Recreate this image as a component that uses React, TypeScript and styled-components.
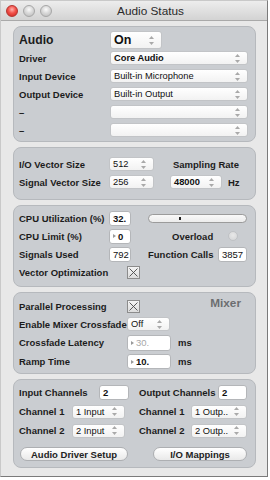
import styled, { createGlobalStyle } from 'styled-components'

const Global = createGlobalStyle`
  html, body { margin: 0; padding: 0; background: #fff; }
  body { font-family: 'Liberation Sans', Arial, sans-serif; color: #1c1c1c; }
`

const Window = styled.div`
  width: 268px;
  height: 477px;
  box-sizing: border-box;
  border: 1px solid #c9c9c9;
  border-right-color: #7a7a7a;
  border-bottom-color: #7a7a7a;
  background: #e8e8e8;
  display: flex;
  flex-direction: column;
`

const TitleBar = styled.div`
  height: 19px;
  flex: none;
  display: flex;
  align-items: center;
  background: linear-gradient(#ededed, #d3d3d3);
  border-bottom: 1px solid #a9a9a9;
`

const Lights = styled.div`
  display: flex;
  gap: 5px;
  padding-left: 5px;
`

const Light = styled.span<{ $red?: boolean }>`
  width: 12px;
  height: 12px;
  border-radius: 50%;
  box-sizing: border-box;
  border: 1px solid ${(p) => (p.$red ? '#b5342f' : '#a7a7a7')};
  background: ${(p) =>
    p.$red
      ? 'radial-gradient(circle at 50% 35%, #ffb3ad 0, #f2514a 45%, #c8231d 100%)'
      : 'radial-gradient(circle at 50% 35%, #fbfbfb 0, #d6d6d6 50%, #b9b9b9 100%)'};
`

const Title = styled.div`
  flex: 1;
  text-align: center;
  font-size: 11.8px;
  color: #2a2a2a;
  margin-right: 18px;
`

const Body = styled.div`
  display: flex;
  flex-direction: column;
  gap: 5px;
  padding: 5px 11px 0 12px;
`

const Panel = styled.div<{ $h: number; $pt: number }>`
  height: ${(p) => p.$h}px;
  box-sizing: border-box;
  border: 1px solid #b6b9bd;
  border-radius: 8px;
  background: #cacdd1;
  padding: ${(p) => p.$pt}px 7px 0 5px;
  display: flex;
  flex-direction: column;
`

const Row = styled.div<{ $h?: number; $mt?: number }>`
  height: ${(p) => p.$h ?? 18}px;
  margin-top: ${(p) => p.$mt ?? 0}px;
  display: flex;
  align-items: center;
  flex: none;
`

const Half = styled.div<{ $w: number; $ml?: number }>`
  width: ${(p) => p.$w}px;
  margin-left: ${(p) => p.$ml ?? 0}px;
  display: flex;
  align-items: center;
  justify-content: space-between;
`

const Label = styled.span<{ $w?: number; $big?: boolean; $ml?: number }>`
  width: ${(p) => (p.$w ? `${p.$w}px` : 'auto')};
  margin-left: ${(p) => p.$ml ?? 0}px;
  flex: none;
  font-weight: bold;
  font-size: ${(p) => (p.$big ? 12.2 : 9.5)}px;
  white-space: nowrap;
  color: #1c1c1c;
`

const Unit = styled.span<{ $ml: number }>`
  margin-left: ${(p) => p.$ml}px;
  font-size: 9.5px;
  font-weight: bold;
`

const Popup = styled.div<{ $w: number; $h?: number; $big?: boolean; $bold?: boolean; $ml?: number }>`
  width: ${(p) => p.$w}px;
  height: ${(p) => p.$h ?? 14}px;
  margin-left: ${(p) => p.$ml ?? 0}px;
  box-sizing: border-box;
  flex: none;
  display: flex;
  align-items: center;
  padding: 0 7px 0 3px;
  border: 1px solid #c2c4c7;
  border-radius: 3px;
  background: linear-gradient(#ffffff, #f2f2f2);
  font-size: ${(p) => (p.$big ? 12.5 : 9.3)}px;
  font-weight: ${(p) => (p.$big || p.$bold ? 'bold' : 'normal')};
  color: #111;
  white-space: nowrap;
  overflow: hidden;

  > svg {
    margin-left: auto;
    flex: none;
  }
`

const NumBox = styled.div<{ $w: number; $h?: number; $ml?: number; $bold?: boolean; $dim?: boolean }>`
  width: ${(p) => p.$w}px;
  height: ${(p) => p.$h ?? 15}px;
  margin-left: ${(p) => p.$ml ?? 0}px;
  box-sizing: border-box;
  flex: none;
  display: flex;
  align-items: center;
  gap: 2px;
  padding-left: 3px;
  border: 1px solid #b4b6b9;
  border-radius: 3px;
  background: #fff;
  font-size: 9.5px;
  font-weight: ${(p) => (p.$bold ? 'bold' : 'normal')};
  color: ${(p) => (p.$dim ? '#a8a8a8' : '#111')};
`

const Tri = styled.span`
  width: 0;
  height: 0;
  border-top: 2.5px solid transparent;
  border-bottom: 2.5px solid transparent;
  border-left: 3px solid #9a9a9a;
`

const Check = styled.div<{ $ml: number }>`
  width: 13px;
  height: 13px;
  margin-left: ${(p) => p.$ml}px;
  box-sizing: border-box;
  flex: none;
  display: flex;
  align-items: center;
  justify-content: center;
  border: 1px solid #8c8c8c;
  background: linear-gradient(#f4f4f4, #dcdcdc);
`

const Meter = styled.div`
  width: 99px;
  height: 9px;
  margin-left: 17px;
  box-sizing: border-box;
  border: 1px solid #9b9b9b;
  border-radius: 5px;
  background: linear-gradient(#f9f9f9, #ececec);
  display: flex;
  align-items: center;
  padding-left: 30px;
`

const MeterMark = styled.span`
  width: 2px;
  height: 3px;
  background: #222;
`

const Led = styled.span`
  width: 10px;
  height: 10px;
  margin-left: 15px;
  border-radius: 50%;
  box-sizing: border-box;
  border: 1px solid #c0c2c5;
  background: radial-gradient(circle at 50% 40%, #e8e8e8, #d2d4d6);
`

const Heading = styled.span`
  margin-left: auto;
  margin-right: 7px;
  align-self: flex-start;
  margin-top: -1px;
  font-size: 11.8px;
  font-weight: bold;
  color: #6c6d70;
`

const Pill = styled.button<{ $w: number; $ml: number }>`
  width: ${(p) => p.$w}px;
  height: 14px;
  margin-left: ${(p) => p.$ml}px;
  padding: 0;
  box-sizing: border-box;
  border: 1px solid #adafb2;
  border-radius: 7px;
  background: linear-gradient(#ffffff, #e9e9e9);
  font-family: 'Liberation Sans', Arial, sans-serif;
  font-size: 9.5px;
  font-weight: bold;
  color: #222;
`

const Arrows = () => (
  <svg width="5" height="9" viewBox="0 0 5 9">
    <path d="M2.5 0 L5 3 L0 3 Z" fill="#a9a9a9" />
    <path d="M0 6 L5 6 L2.5 9 Z" fill="#a9a9a9" />
  </svg>
)

const X = () => (
  <svg width="9" height="9" viewBox="0 0 9 9">
    <path d="M0.5 0.5 L8.5 8.5 M8.5 0.5 L0.5 8.5" stroke="#4a4a4a" strokeWidth="0.9" />
  </svg>
)

const devices = [
  ['Driver', 'Core Audio', true],
  ['Input Device', 'Built-in Microphone', false],
  ['Output Device', 'Built-in Output', false],
  ['–', '', false],
  ['–', '', false],
] as const

export default function App() {
  return (
    <>
      <Global />
      <Window>
        <TitleBar>
          <Lights>
            <Light $red />
            <Light />
            <Light />
          </Lights>
          <Title>Audio Status</Title>
        </TitleBar>
        <Body>
          <Panel $h={116} $pt={4}>
            <Row $h={18}>
              <Label $w={91} $big>Audio</Label>
              <Popup $w={52} $h={18} $big>
                On
                <Arrows />
              </Popup>
            </Row>
            {devices.map(([label, value, bold], i) => (
              <Row key={i}>
                <Label $w={91}>{label}</Label>
                <Popup $w={138} $bold={bold}>
                  {value}
                  <Arrows />
                </Popup>
              </Row>
            ))}
          </Panel>

          <Panel $h={53} $pt={7}>
            <Row>
              <Label $w={90}>I/O Vector Size</Label>
              <Popup $w={45}>
                512
                <Arrows />
              </Popup>
              <Label $ml={19}>Sampling Rate</Label>
            </Row>
            <Row>
              <Label $w={90}>Signal Vector Size</Label>
              <Popup $w={45}>
                256
                <Arrows />
              </Popup>
              <Popup $w={52} $ml={16} $bold>
                48000
                <Arrows />
              </Popup>
              <Unit $ml={6}>Hz</Unit>
            </Row>
          </Panel>

          <Panel $h={82} $pt={3}>
            <Row>
              <Label $w={90}>CPU Utilization (%)</Label>
              <NumBox $w={22} $bold>32.</NumBox>
              <Meter>
                <MeterMark />
              </Meter>
            </Row>
            <Row>
              <Label $w={90}>CPU Limit (%)</Label>
              <NumBox $w={22} $bold>
                <Tri />0
              </NumBox>
              <Label $ml={41}>Overload</Label>
              <Led />
            </Row>
            <Row>
              <Label $w={90}>Signals Used</Label>
              <NumBox $w={22}>792</NumBox>
              <Label $w={70} $ml={17}>Function Calls</Label>
              <NumBox $w={29}>3857</NumBox>
            </Row>
            <Row>
              <Label $w={90}>Vector Optimization</Label>
              <Check $ml={18}>
                <X />
              </Check>
            </Row>
          </Panel>

          <Panel $h={82} $pt={4}>
            <Row>
              <Label $w={108}>Parallel Processing</Label>
              <Check $ml={0}>
                <X />
              </Check>
              <Heading>Mixer</Heading>
            </Row>
            <Row>
              <Label $w={108}>Enable Mixer Crossfade</Label>
              <Popup $w={43}>
                Off
                <Arrows />
              </Popup>
            </Row>
            <Row $h={19}>
              <Label $w={108}>Crossfade Latency</Label>
              <NumBox $w={44} $h={16} $dim>
                <Tri />30.
              </NumBox>
              <Unit $ml={7}>ms</Unit>
            </Row>
            <Row $h={19}>
              <Label $w={108}>Ramp Time</Label>
              <NumBox $w={44} $bold>
                <Tri />10.
              </NumBox>
              <Unit $ml={7}>ms</Unit>
            </Row>
          </Panel>

          <Panel $h={89} $pt={3}>
            <Row $h={19}>
              <Half $w={110}>
                <Label>Input Channels</Label>
                <NumBox $w={30} $bold>2</NumBox>
              </Half>
              <Half $w={108} $ml={10}>
                <Label>Output Channels</Label>
                <NumBox $w={29} $bold>2</NumBox>
              </Half>
            </Row>
            {[1, 2].map((n) => (
              <Row key={n} $h={19}>
                <Half $w={106}>
                  <Label>Channel {n}</Label>
                  <Popup $w={53}>
                    {n} Input
                    <Arrows />
                  </Popup>
                </Half>
                <Half $w={108} $ml={14}>
                  <Label>Channel {n}</Label>
                  <Popup $w={56}>
                    {n} Outp..
                    <Arrows />
                  </Popup>
                </Half>
              </Row>
            ))}
            <Row $h={14} $mt={7}>
              <Pill $w={108} $ml={1}>Audio Driver Setup</Pill>
              <Pill $w={94} $ml={25}>I/O Mappings</Pill>
            </Row>
          </Panel>
        </Body>
      </Window>
    </>
  )
}
